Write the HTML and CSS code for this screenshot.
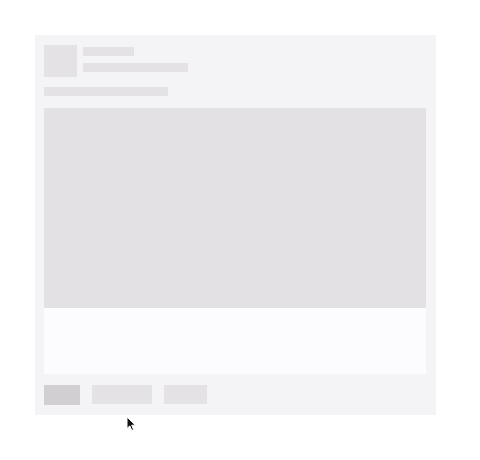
FILE: index.html
```html
<!DOCTYPE html>
<html>
<head>
<meta charset="utf-8">
<link rel="stylesheet" href="styles.css">
</head>
<body>
<div class="card">
  <div class="header">
    <div class="avatar"></div>
    <div class="lines">
      <div class="sk line1"></div>
      <div class="sk line2"></div>
    </div>
  </div>
  <div class="sk line3"></div>
  <div class="sk media"></div>
  <div class="textbox"></div>
  <div class="actions">
    <div class="btn btn-primary"></div>
    <div class="btn btn-wide"></div>
    <div class="btn btn-mid"></div>
  </div>
</div>
<svg class="cursor" width="12" height="16" viewBox="0 0 12 16"><path d="M1 1 L1 12.5 L3.8 9.9 L5.8 14.4 L7.6 13.6 L5.7 9.2 L9.4 9.2 Z" fill="#111" stroke="#fff" stroke-width="1"/></svg>
</body>
</html>
```
FILE: styles.css
```css
html, body {
  margin: 0;
  padding: 0;
  background: #ffffff;
  font-family: "Liberation Sans", sans-serif;
}
body {
  position: relative;
  width: 480px;
  height: 460px;
}
.card {
  position: relative;
  margin: 35px 0 0 35px;
  width: 401px;
  height: 380px;
  box-sizing: border-box;
  padding: 10px 10px 10px 9px;
  background: #f4f3f5;
  display: flex;
  flex-direction: column;
}
.sk {
  background: #e4e2e5;
}
.header {
  display: flex;
  gap: 6px;
  height: 32px;
}
.avatar {
  width: 33px;
  height: 32px;
  background: #e4e2e5;
}
.lines {
  display: flex;
  flex-direction: column;
  padding-top: 2px;
  gap: 7px;
}
.line1 { width: 51px; height: 9px; }
.line2 { width: 105px; height: 9px; }
.line3 { width: 124px; height: 9px; margin-top: 10px; }
.media {
  margin-top: 12px;
  height: 200px;
  background: #e3e1e4;
}
.textbox {
  height: 66px;
  background: #fcfbfd;
}
.actions {
  display: flex;
  gap: 12px;
  margin-top: 11px;
}
.btn {
  height: 20px;
  background: #e4e2e5;
}
.btn-primary { width: 36px; background: #d1cfd2; }
.btn-wide { width: 60px; height: 19px; }
.btn-mid { width: 43px; height: 19px; }
.cursor {
  position: absolute;
  left: 126px;
  top: 416px;
}
```
